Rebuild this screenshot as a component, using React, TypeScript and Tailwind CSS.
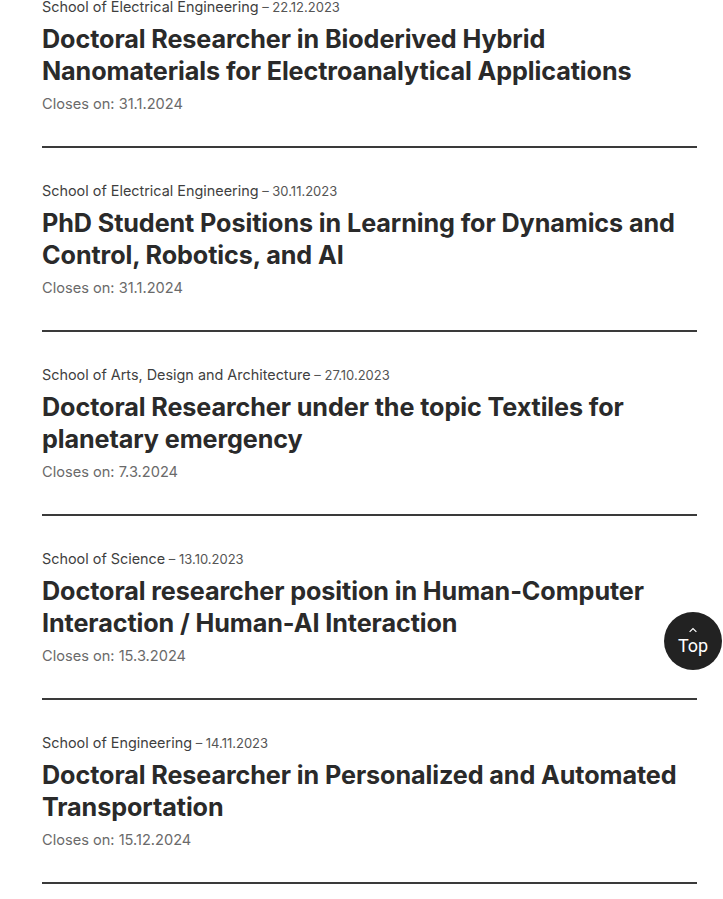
import * as React from "react";

type Job = {
  school: string;
  posted: string;
  title: string;
  closes: string;
};

const jobs: Job[] = [
  {
    school: "School of Electrical Engineering",
    posted: "22.12.2023",
    title: "Doctoral Researcher in Bioderived Hybrid Nanomaterials for Electroanalytical Applications",
    closes: "31.1.2024",
  },
  {
    school: "School of Electrical Engineering",
    posted: "30.11.2023",
    title: "PhD Student Positions in Learning for Dynamics and Control, Robotics, and AI",
    closes: "31.1.2024",
  },
  {
    school: "School of Arts, Design and Architecture",
    posted: "27.10.2023",
    title: "Doctoral Researcher under the topic Textiles for planetary emergency",
    closes: "7.3.2024",
  },
  {
    school: "School of Science",
    posted: "13.10.2023",
    title: "Doctoral researcher position in Human-Computer Interaction / Human-AI Interaction",
    closes: "15.3.2024",
  },
  {
    school: "School of Engineering",
    posted: "14.11.2023",
    title: "Doctoral Researcher in Personalized and Automated Transportation",
    closes: "15.12.2024",
  },
];

function JobItem({ job }: { job: Job }) {
  return (
    <li className="border-b-2 border-[#3a3a3a] pb-[32px] pt-[33px] first:pt-0">
      <div className="text-[14.4px] leading-[20px] text-[#3f3f3f]">
        {job.school}
        <span className="text-[13px] text-[#555]"> – {job.posted}</span>
      </div>
      <a href="#" className="mt-[6px] block text-[25.2px] font-bold leading-[32px] tracking-[-0.1px] text-[#2a2a2a]">
        {job.title}
      </a>
      <div className="mt-[7px] text-[14.6px] leading-[20px] text-[#6a6a6a]">
        Closes on: {job.closes}
      </div>
    </li>
  );
}

export default function App() {
  return (
    <div className="relative h-[899px] overflow-hidden bg-white font-['Inter',sans-serif]">
      <ul className="-mt-[3px] pl-[42px] pr-[26px]">
        {jobs.map((j) => (
          <JobItem key={j.title} job={j} />
        ))}
      </ul>
      <button
        type="button"
        className="absolute left-[664px] top-[612px] flex h-[58px] w-[58px] flex-col items-center justify-center rounded-full bg-[#222] text-white"
      >
        <svg viewBox="0 0 12 8" className="h-[6px] w-[10px]" fill="none" stroke="currentColor" strokeWidth="1.6">
          <path d="M1.5 6.5 6 2l4.5 4.5" />
        </svg>
        <span className="mt-[4px] font-['Roboto',sans-serif] text-[18px] leading-[18px]">Top</span>
      </button>
    </div>
  );
}
